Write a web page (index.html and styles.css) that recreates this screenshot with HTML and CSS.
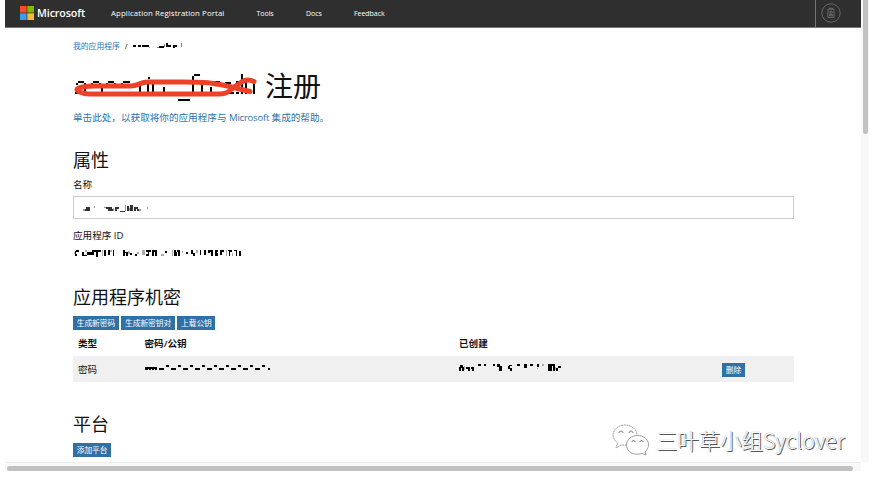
FILE: index.html
```html
<!DOCTYPE html>
<html lang="zh-CN">
<head>
<meta charset="utf-8">
<title>Application Registration Portal</title>
<link rel="stylesheet" href="styles.css">
</head>
<body>
<div class="window">
  <div class="viewport">
    <header class="topbar">
      <svg class="logo" viewBox="0 0 14 14"><path fill="#f25022" d="M0 0h6.6v6.6H0z"/><path fill="#7fba00" d="M7.3 0H14v6.6H7.3z"/><path fill="#38a0e8" d="M0 7.3h6.6V14H0z"/><path fill="#fdb92c" d="M7.3 7.3H14V14H7.3z"/></svg>
      <span class="brand">Microsoft</span>
      <span class="portal">Application Registration Portal</span>
      <nav class="nav"><a class="tools">Tools</a><a class="docs">Docs</a><a>Feedback</a></nav>
      <div class="account">
        <svg viewBox="0 0 20 20" fill="none" stroke="#777" stroke-width=".8"><circle cx="10" cy="10" r="9.2"/><path d="M7 6.2h6v8.3H7zM8.5 6V4.7M11.5 6V4.7M9 5.2h2M8.5 12.8v-1.5h3v1.5z"/><circle cx="10" cy="9.2" r="1.2"/></svg>
      </div>
    </header>
    <main class="content">
      <div class="crumbs"><a>我的应用程序</a><span class="slash">/</span>
        <svg class="crumb-mask" viewBox="0 0 52 10"><path d="M1 4h3v2H1zM6 4h3v2H6zM10 4h7v2h-7zM27 5h5v2h-5zM34 2h2v2h3v2h-5zM41 4h4v2h-2v1h-2z"/><path fill="#888" d="M17 6h1v1h-1zM25 6h2v1h-2zM32 3h1v3h-1zM49 2h1v4h-1z"/></svg>
      </div>
      <h1 class="title">
        <svg class="title-mask" viewBox="0 0 192 36"><path d="M5 13h6v2H5zM3 15h2v2H3zM11 15h2v9h-2zM2 24h3v2H2zM20 13h6v2h-6zM18 15h2v2h-2zM26 15h2v2h-2zM28 20h2v5h-2zM35 13h6v2h-6zM33 15h2v2h-2zM41 15h2v2h-2zM50 13h7v2h-7zM48 15h2v2h-2zM75 9h2v2h-2zM66 14h2v12h-2zM74 14h2v12h-2zM79 16h2v9h-2zM90 19h2v6h-2zM105 31h12v2h-12zM121 6h6v2h-6zM119 8h2v18h-2zM115 13h8v2h-8zM128 14h2v12h-2zM139 13h8v2h-8zM137 19h2v6h-2zM152 14h6v2h-6zM163 13h4v2h-4zM168 6h2v20h-2zM156 24h5v2h-5zM163 24h3v2h-3zM172 14h2v12h-2zM180 15h2v11h-2z"/><path class="strike" d="M181 13.500C171 9 167 16 161 19c-5 5-8 7-15 7H16C9 26 4 23 4 21.500c0-2 10-3.500 17-3.500h37c7 0 9-4 17-4h34c13 0 26 0 34 2 9 1 23 5 34 7.500"/></svg>
        <span>注册</span>
      </h1>
      <a class="help">单击此处，以获取将你的应用程序与 <span class="latin">Microsoft</span> 集成的帮助。</a>

      <h2 class="properties">属性</h2>
      <div class="label">名称</div>
      <div class="field">
        <svg viewBox="0 0 80 12"><path fill="#333" d="M9 5h4v4H8V7h1zM29 5h6v2h1v2h-5V7h-2zM38 5h4v2h-2v2h-2zM43 9h5v1h-5zM50 4h2v5h-2zM53 3h3v6h-3zM57 5h4v2h1v2h-2V7h-1v2h-2z"/><path fill="#999" d="M6 7h2v2H6zM17 4h1v2h-1zM27 5h2v1h-2zM36 6h1v3h-1zM48 3h1v6h-1zM52 6h1v3h-1zM62 7h2v2h-2zM70 5h1v2h-1z"/></svg>
      </div>
      <div class="label app-id">应用程序 ID</div>
      <svg class="id-mask" viewBox="0 0 172 12"><path d="M3 3h3v2H3zM2 4h1v3h1v2H2zM9 5h2v3h3v1H9zM14 5h5V3h9v2h-3v5h-2V5h-2v3h-7zM31 3h2v6h-2zM35 3h2v5h-2zM40 3h1v6h-1zM50 3h2v2h3v4h-2V6h-1v3h-2zM57 6h2v2h-2zM62 7h2v2h-2zM73 3h5v2h-2v4h-3V7h2V5h-2zM79 3h5v6h-2V5h-1v4h-2zM92 4h2v2h-2zM101 3h2v2h1V3h3v6h-2V5h-1v4h-3zM113 5h2v2h-2zM118 3h2v3h2v3h-2V7h-2zM127 3h1v5h-1zM131 3h2v5h-2zM135 3h5v6h-2V5h-1v1h-2zM142 3h3v2h-1v1h1v3h-3zM147 3h4v2h-2v3h-2zM155 3h4v2h-2v4h-1V4h-1zM161 3h3v6h-1V4h-2zM166 4h2v5h-2z"/><path fill="#aaa" d="M1 5h1v2H1zM12 3h2v2h-2zM29 3h1v6h-1zM37 3h2v2h-2zM55 4h2v3h-2zM64 5h2v2h-2zM69 3h3v5h-3zM88 7h3v2h-3zM99 3h1v6h-1zM109 4h1v2h-1zM123 3h2v3h-2zM153 3h1v6h-1zM159 6h1v3h-1z"/></svg>

      <h2 class="secrets">应用程序机密</h2>
      <div class="buttons"><button>生成新密码</button><button>生成新密钥对</button><button>上载公钥</button></div>
      <div class="row head"><span>类型</span><span>密码/公钥</span><span>已创建</span><span></span></div>
      <div class="row entry">
        <span>密码</span>
        <span><svg class="key-mask" viewBox="0 0 128 10"><path d="M0 3h12v3h-2V5H9v1H7V5H6v1H4V5H3v1H0zM14 4h5v2h-5zM26 4h5v2h-5zM38 4h5v2h-5zM50 4h5v2h-5zM62 4h5v2h-5zM74 4h5v2h-5zM86 4h5v2h-5zM98 4h5v2h-5zM110 4h5v2h-5zM21 1h3v2h-3zM33 1h3v2h-3zM45 1h3v2h-3zM57 1h3v2h-3zM69 1h3v2h-3zM81 1h3v2h-3zM93 1h3v2h-3zM105 1h3v2h-3zM117 1h3v2h-3zM123 4h2v2h-2z"/></svg></span>
        <span><svg class="date-mask" viewBox="0 0 108 10"><path d="M0 4h1V2h3v2h1v4H3V5H2v3H0zM7 4h4v4H9V6H7zM12 4h3v4h-2V6h-1zM19 1h3v2h-3zM25 1h2v2h-2zM34 1h2v2h-2zM38 1h3v2h2v5h-3V4h-2zM50 2h3v1h-2v2h2v3h-2V6h-2V3h1zM58 1h3v2h-3zM65 1h3v4h-3zM71 1h3v2h-3zM78 1h2v3h-2zM89 1h7v7h-2V3h-1v5h-4zM97 5h2v3h-2zM99 3h3v2h-3z"/><path fill="#aaa" d="M5 3h1v4H5zM78 5h1v1h-1zM83 1h2v2h-2zM96 4h1v3h-1z"/></svg></span>
        <span><button>删除</button></span>
      </div>

      <h2 class="platforms">平台</h2>
      <div class="buttons"><button>添加平台</button></div>
    </main>
  </div>
  <div class="vtrack"><div class="vthumb"></div></div>
  <div class="htrack"><div class="hthumb"></div></div>
</div>
<div class="watermark">
  <svg viewBox="0 0 38 34" fill="#fff" stroke="#888" stroke-width=".8"><path stroke-dasharray="2 .6" d="M9 21l-5 3 1.500-5C2.500 16.500 1 14 1 11 1 5.500 6.500 1 13 1s12 4.500 12 10-5.500 10-12 10z"/><path d="M33 28l1 3-4-1.500c-8 2.500-15.500-1.500-15.500-8.500 0-5.500 5-9.500 11-9.500S36.500 15.500 36.500 20.500c0 3.300-1.500 5.500-3.500 7.500z"/><path fill="none" stroke="#555" d="M7 9c0-2.500 4-2.500 4 0M17 9c0-2.500 4-2.500 4 0M20 18c0-2 3-2 3 0M28 18c0-2 3-2 3 0"/></svg>
  <span>三叶草小组Syclover</span>
</div>
</body>
</html>
```

FILE: styles.css
```css
* { box-sizing: border-box; }
body {
  margin: 0;
  width: 874px;
  height: 482px;
  overflow: hidden;
  background: #fff;
  color: #111;
  font-family: "Open Sans", "Noto Sans CJK SC", sans-serif;
  font-size: 9.6px;
}
svg { display: block; flex: none; }
.window {
  display: grid;
  grid-template: 462px 9px / 856px 8px;
  margin-left: 5px;
}
.viewport { overflow: hidden; }
.topbar {
  display: flex;
  align-items: center;
  height: 28px;
  padding-left: 15px;
  background: #2f2f2f;
  border-bottom: 1px solid #777;
  color: #fff;
  white-space: nowrap;
}
.logo { width: 14px; height: 14px; margin-top: -2px; }
.brand { width: 74px; margin: -2px 0 0 3px; font-size: 10.700px; font-weight: 600; letter-spacing: -.1px; }
.portal { width: 145.500px; margin-top: -1px; font-size: 7.800px; letter-spacing: .11px; }
.nav { display: flex; font-size: 7px; letter-spacing: -.05px; }
.tools { width: 49.500px; }
.docs { width: 48px; }
.account {
  width: 46px;
  height: 27px;
  margin-left: auto;
  padding: 3px 0 0 5px;
  border-left: 1px solid #777;
}
.account svg { width: 20px; height: 20px; }
.content { width: 789px; padding: 12px 0 0 68px; }
.crumbs { display: flex; align-items: center; height: 12px; font-size: 7.800px; line-height: 10px; padding-bottom: 1px; }
.crumbs a, .help { color: #2f74ab; }
.slash { margin: 0 4px 0 5px; }
.crumb-mask { width: 52px; height: 10px; margin-top: 1px; }
.title {
  display: flex;
  align-items: center;
  height: 36px;
  margin: 16px 0 0;
  font-size: 28px;
  font-weight: 400;
  line-height: 36px;
}
.title-mask { width: 192px; height: 36px; }
.strike { fill: none; stroke: #ef4028; stroke-width: 5px; stroke-linecap: round; stroke-linejoin: round; }
.help { display: block; height: 14px; margin-top: 7px; line-height: 14px; white-space: nowrap; }
.latin { letter-spacing: -.25px; }
h2 { height: 24px; margin: 0; font-size: 18px; font-weight: 400; line-height: 24px; }
.properties { margin-top: 23px; }
.label { height: 14px; margin-top: 6px; line-height: 14px; }
.field { height: 23px; margin-top: 4px; padding: 5px 0 0 3px; border: 1px solid #ccc; }
.field svg { width: 80px; height: 12px; }
.app-id { margin-top: 10px; }
.id-mask { width: 172px; height: 12px; margin-top: 4px; }
.secrets { margin-top: 26px; }
.buttons { display: flex; gap: 2.500px; margin-top: 7px; }
button {
  display: block;
  height: 14px;
  padding: 0 3.700px;
  border: 0;
  background: #2f70a7;
  color: #fff;
  font: 7.700px/14px "Open Sans", "Noto Sans CJK SC", sans-serif;
  white-space: nowrap;
}
.row { display: grid; grid-template-columns: 66.500px 314.500px 263px 1fr; align-items: center; padding-left: 5px; }
.head { height: 26px; font-weight: 600; }
.entry { height: 26px; background: #f0f0f0; }
.entry button { width: 23px; margin-top: 1px; }
.key-mask { width: 128px; height: 10px; margin-top: -1px; }
.date-mask { width: 108px; height: 10px; margin-top: -2px; }
.platforms { margin-top: 30px; }
.vtrack { background: #f8f8f8; padding-left: 2px; }
.vthumb { width: 5px; height: 134px; border-radius: 0 0 3px 3px; background: #c1c1c1; }
.htrack { background: #f8f8f8; padding: 3px 0 0 2px; border-top: 1px solid #eee; }
.hthumb { width: 846px; height: 5px; border-radius: 3px; background: #c1c1c1; }
.watermark {
  position: absolute;
  left: 612px;
  top: 422px;
  display: flex;
  align-items: center;
  gap: 6px;
  font: 300 21.400px/36px "Noto Sans CJK SC", sans-serif;
  white-space: nowrap;
}
.watermark svg { width: 38px; height: 34px; margin-top: 2px; }
.watermark span { color: #fff; text-shadow: 1px 1px 0 #555, 0 0 1px #777; }
```
